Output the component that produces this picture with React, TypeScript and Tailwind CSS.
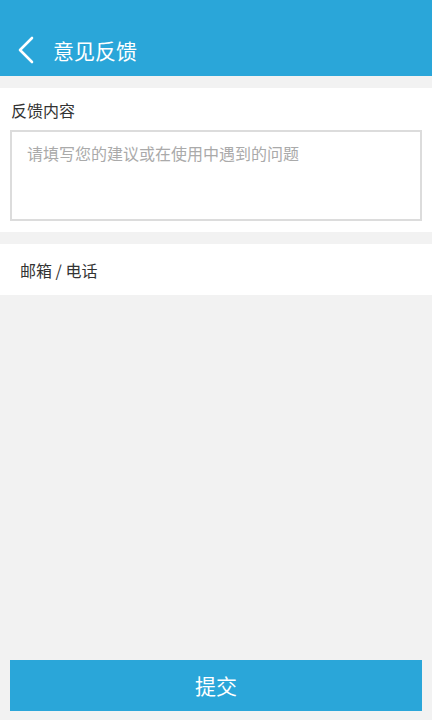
import React from "react";

export default function App() {
  return (
    <div
      className="flex h-[720px] w-full flex-col bg-[#f2f2f2]"
      style={{ fontFamily: '"Noto Sans CJK SC", "Noto Sans", sans-serif' }}
    >
      <div className="flex h-[76px] shrink-0 items-center bg-[#2aa6d9] pt-[24px]">
        <svg width="18" height="28" viewBox="0 0 18 28" className="ml-[17px]">
          <path d="M15 2 L3 14 L15 26" fill="none" stroke="#fff" strokeWidth="2.6" strokeLinecap="round" strokeLinejoin="round" />
        </svg>
        <span className="ml-[18px] text-[21px] leading-none text-white">意见反馈</span>
      </div>
      <div className="mt-[12px] bg-white px-[10px] pb-[11px] pt-[10px]">
        <div className="pl-[1px] text-[16px] leading-[24px] text-[#333]">反馈内容</div>
        <div className="mt-[8px] h-[91px] border-2 border-[#dcdcdc] px-[15px] pt-[9px] text-[16px] leading-[24px] text-[#aaaaaa]">
          请填写您的建议或在使用中遇到的问题
        </div>
      </div>
      <div className="mt-[12px] flex h-[51px] items-center bg-white px-[20px] text-[16px] text-[#333]">
        邮箱 / 电话
      </div>
      <div className="flex-1" />
      <div className="mx-[10px] mb-[9px] flex h-[51px] items-center justify-center bg-[#2aa6d9] text-[21px] text-white">
        提交
      </div>
    </div>
  );
}
